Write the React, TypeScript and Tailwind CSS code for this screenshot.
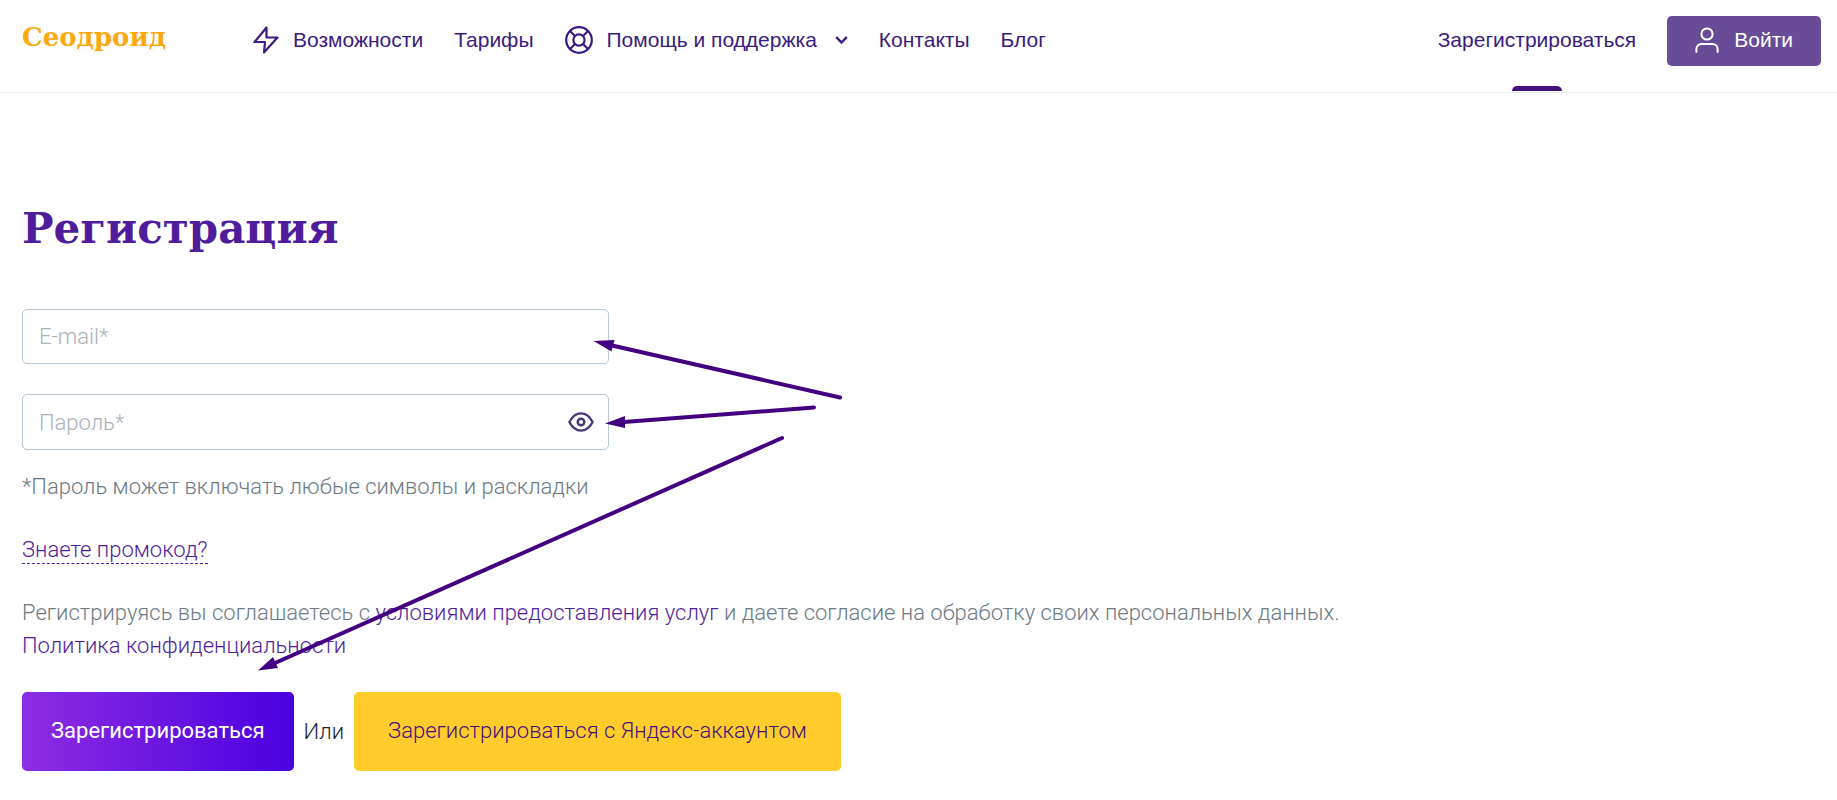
import { useState } from 'react';
import type { ReactNode } from 'react';

function BoltIcon() {
  return (
    <svg width="26" height="28" viewBox="0 0 26 28" fill="none" stroke="currentColor" strokeWidth="2.200" strokeLinejoin="round" aria-hidden="true">
      <path d="M13.500 1.500L1.500 16H12L11 26.500L24.500 11.500H13.500L13.500 1.500z" />
    </svg>
  );
}

function LifeBuoyIcon() {
  return (
    <svg width="28" height="28" viewBox="0 0 28 28" fill="none" stroke="currentColor" strokeWidth="2.200" aria-hidden="true">
      <circle cx="14" cy="14" r="12.8" />
      <circle cx="14" cy="14" r="5.6" />
      <path d="M5 5l5 5M23 5l-5 5M5 23l5-5M23 23l-5-5" />
    </svg>
  );
}

function ChevronIcon() {
  return (
    <svg width="13" height="10" viewBox="0 0 13 10" fill="none" stroke="currentColor" strokeWidth="2.500" aria-hidden="true">
      <path d="M1.200 2L6.500 7.500L11.800 2" />
    </svg>
  );
}

function UserIcon() {
  return (
    <svg width="24" height="26" viewBox="0 0 24 26" fill="none" stroke="currentColor" strokeWidth="2" strokeLinecap="round" aria-hidden="true">
      <circle cx="12" cy="7" r="5.6" />
      <path d="M1.4 25v-3a5 5 0 0 1 5-5h11.2a5 5 0 0 1 5 5v3" />
    </svg>
  );
}

function EyeIcon() {
  return (
    <svg width="26" height="20" viewBox="0 0 26 20" fill="none" stroke="currentColor" strokeWidth="2.400" strokeLinejoin="round" aria-hidden="true">
      <path d="M1.4 10C4.5 4 8.500 1.400 13 1.400S21.500 4 24.600 10C21.500 16 17.500 18.600 13 18.600S4.500 16 1.400 10z" />
      <circle cx="13" cy="10" r="3.300" />
    </svg>
  );
}

function NavLink({ children }: { children: ReactNode }) {
  return (
    <a href="#" className="flex items-center gap-[14px] whitespace-nowrap">
      {children}
    </a>
  );
}

function Header() {
  return (
    <header className="flex items-start justify-between border-b border-[#e6ecec] pl-[22px] pr-4 pt-4 pb-[26px] font-['Liberation_Sans',Arial,sans-serif] text-[21px] text-[#3b1a80]">
      <div className="flex h-12 items-center">
        <a href="#" className="w-[231px] pb-1.5 font-['Roboto_Slab','DejaVu_Serif',serif] text-[26px] font-bold leading-8 text-[#faa90f]">
          Сеодроид
        </a>
        <nav className="flex items-center gap-[31px]">
          <NavLink>
            <BoltIcon />
            Возможности
          </NavLink>
          <NavLink>Тарифы</NavLink>
          <NavLink>
            <LifeBuoyIcon />
            <span className="mr-1">Помощь и поддержка</span>
            <ChevronIcon />
          </NavLink>
          <NavLink>Контакты</NavLink>
          <NavLink>Блог</NavLink>
        </nav>
      </div>
      <div className="flex items-start gap-[31px]">
        <a href="#" className="relative flex h-12 items-center">
          Зарегистрироваться
          <span className="absolute -bottom-[27px] left-1/2 h-[5px] w-[50px] -translate-x-1/2 rounded-t-md bg-[#43127f]" />
        </a>
        <button type="button" className="flex h-[50px] items-center gap-[15px] rounded-[5px] bg-[#684c97] px-7 pb-0.5 text-white">
          <UserIcon />
          Войти
        </button>
      </div>
    </header>
  );
}

function Arrows() {
  return (
    <svg className="pointer-events-none absolute left-0 top-0" width="860" height="700" viewBox="0 0 860 700" aria-hidden="true">
      <g stroke="#420080" strokeWidth="4" strokeLinecap="round">
        <path d="M840 397.500L612 345.500" />
        <path d="M814 407.500L624 422" />
        <path d="M782 438L275 663" />
      </g>
      <g fill="#420080">
        <path d="M593.500 341L614.500 340L611.500 351.500z" />
        <path d="M605 423.500L625 416L625 428z" />
        <path d="M258 670.500L273 657L278 668z" />
      </g>
    </svg>
  );
}

export default function App() {
  const [email, setEmail] = useState('');
  const [password, setPassword] = useState('');
  const [visible, setVisible] = useState(false);

  return (
    <div className="relative bg-white">
      <Header />
      <main className="px-[22px] pb-7 pt-[106px] font-[Roboto,sans-serif] text-[22px] font-light leading-[33px] text-[#6c7a86]">
        <h1 className="font-['Roboto_Slab','DejaVu_Serif',serif] text-[42px] font-bold leading-[60px] text-[#4f1d9c]">
          Регистрация
        </h1>
        <form onSubmit={(e) => e.preventDefault()}>
          <div className="mt-[50px] flex max-w-[587px] flex-col gap-[30px]">
            <input
              type="email"
              aria-label="E-mail"
              placeholder="E-mail*"
              value={email}
              onChange={(e) => setEmail(e.target.value)}
              className="h-[55px] w-full rounded-[5px] border border-[#b8c8d4] px-4 placeholder:text-[#a9b2ba]"
            />
            <div className="flex h-[56px] items-center rounded-[5px] border border-[#b8c8d4] px-4 pr-[14px]">
              <input
                type={visible ? 'text' : 'password'}
                aria-label="Пароль"
                placeholder="Пароль*"
                value={password}
                onChange={(e) => setPassword(e.target.value)}
                className="min-w-0 flex-1 outline-none placeholder:text-[#a9b2ba]"
              />
              <button type="button" aria-label="Показать пароль" className="text-[#4a3577]" onClick={() => setVisible(!visible)}>
                <EyeIcon />
              </button>
            </div>
          </div>
          <p className="mt-5">*Пароль может включать любые символы и раскладки</p>
          <button type="button" className="mt-[34px] block border-b border-dashed border-[#4f1d9c] leading-[26px] text-[#4f1d9c]">
            Знаете промокод?
          </button>
          <p className="mt-8">
            Регистрируясь вы соглашаетесь с{' '}
            <a href="#" className="text-[#4f1d9c]">условиями предоставления услуг</a>
            {' '}и даете согласие на обработку своих персональных данных.
            <br />
            <a href="#" className="text-[#4f1d9c]">Политика конфиденциальности</a>
          </p>
          <div className="mt-[30px] flex items-center gap-[10px]">
            <button type="submit" className="h-[79px] rounded-[5px] bg-linear-to-r/srgb from-[#8e2de2] to-[#4a00e0] px-[29px] pb-0.5 font-normal text-white">
              Зарегистрироваться
            </button>
            <span className="text-[#1b2433]">Или</span>
            <button type="button" className="h-[79px] rounded-[5px] bg-[#ffcc2b] px-[34px] pb-0.5 text-[#43127f]">
              Зарегистрироваться с Яндекс-аккаунтом
            </button>
          </div>
        </form>
      </main>
      <Arrows />
    </div>
  );
}
